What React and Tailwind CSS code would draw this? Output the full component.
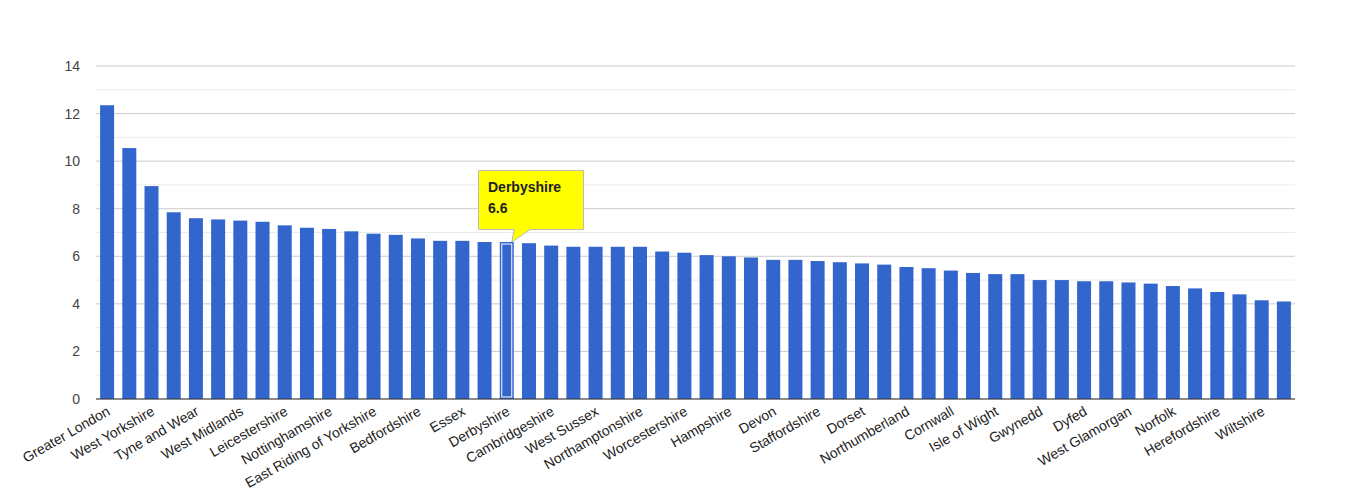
const DATA = [
  ['Greater London', 12.35], ['', 10.55], ['West Yorkshire', 8.95], ['', 7.85], ['Tyne and Wear', 7.6], ['', 7.55],
  ['West Midlands', 7.5], ['', 7.45], ['Leicestershire', 7.3], ['', 7.2], ['Nottinghamshire', 7.15], ['', 7.05],
  ['East Riding of Yorkshire', 6.95], ['', 6.9], ['Bedfordshire', 6.75], ['', 6.65], ['Essex', 6.65], ['', 6.6],
  ['Derbyshire', 6.6], ['', 6.55], ['Cambridgeshire', 6.45], ['', 6.4], ['West Sussex', 6.4], ['', 6.4],
  ['Northamptonshire', 6.4], ['', 6.2], ['Worcestershire', 6.15], ['', 6.05], ['Hampshire', 6.0], ['', 5.95],
  ['Devon', 5.85], ['', 5.85], ['Staffordshire', 5.8], ['', 5.75], ['Dorset', 5.7], ['', 5.65],
  ['Northumberland', 5.55], ['', 5.5], ['Cornwall', 5.4], ['', 5.3], ['Isle of Wight', 5.25], ['', 5.25],
  ['Gwynedd', 5.0], ['', 5.0], ['Dyfed', 4.95], ['', 4.95], ['West Glamorgan', 4.9], ['', 4.85],
  ['Norfolk', 4.75], ['', 4.65], ['Herefordshire', 4.5], ['', 4.4], ['Wiltshire', 4.15], ['', 4.1],
]

const X0 = 96, X1 = 1295, Y0 = 399, PX = 333 / 14
const STEP = (X1 - X0) / DATA.length

export default function App() {
  return (
    <div className="w-[1350px] h-[490px] bg-white overflow-hidden" style={{ fontFamily: '"Liberation Sans", Arial, sans-serif' }}>
      <svg width="1350" height="490" className="block">
        {Array.from({ length: 15 }, (_, i) => (
          <line key={i} x1={X0} x2={X1} y1={Y0 - i * PX} y2={Y0 - i * PX}
            stroke={i % 2 ? '#ebebeb' : '#cccccc'} strokeWidth="1" />
        ))}
        {[0, 2, 4, 6, 8, 10, 12, 14].map(v => (
          <text key={v} x={80} y={Y0 - v * PX + 5} textAnchor="end" fontSize="14" fill="#444">{v}</text>
        ))}
        {DATA.map(([name, v], i) => {
          const cx = X0 + STEP * (i + 0.5)
          const h = v * PX
          const hi = i === 18
          return (
            <g key={i}>
              <rect x={cx - 7} y={Y0 - h} width="14" height={h} fill="#3366cc" />
              {hi && <rect x={cx - 5} y={Y0 - h + 2} width="10" height={h - 4} fill="none" stroke="#fff" strokeWidth="1" />}
              {name && (
                <text x={cx + 4} y={414} textAnchor="end" fontSize="14" fill="#222"
                  transform={`rotate(-30 ${cx + 4} 414)`}>{name}</text>
              )}
            </g>
          )
        })}
        <line x1={X0} x2={X1} y1={Y0} y2={Y0} stroke="#333" />
        <path d="M478.5 170.5 H583.5 V229.5 H530 L512 242 L514 229.5 H478.5 Z" fill="#ffff00" stroke="#bbbbbb" />
        <text x="488" y="192" fontSize="14" fontWeight="bold" fill="#222">Derbyshire</text>
        <text x="488" y="213" fontSize="14" fontWeight="bold" fill="#222">6.6</text>
      </svg>
    </div>
  )
}
